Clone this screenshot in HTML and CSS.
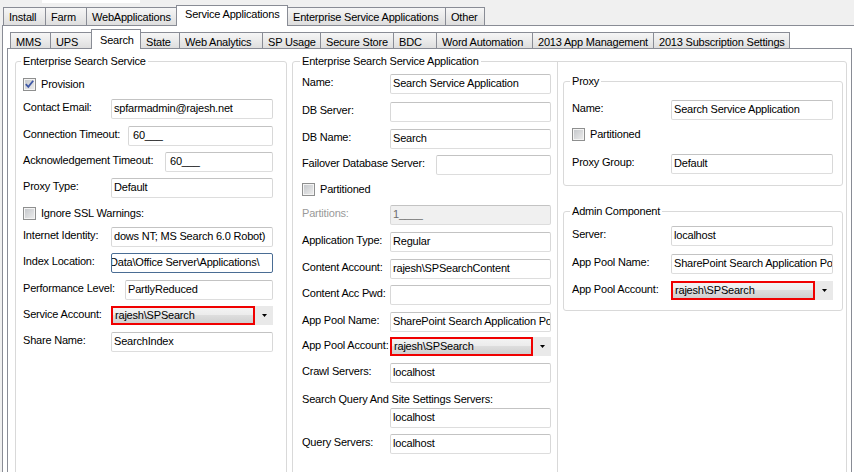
FILE: index.html
```html
<!DOCTYPE html>
<html>
<head>
<meta charset="utf-8">
<title>Search</title>
<link rel="stylesheet" href="styles.css">
</head>
<body>
<div class="blank"></div>
<div class="tabstrip outer-strip">
  <div class="tab w43">Install</div>
  <div class="tab w42">Farm</div>
  <div class="tab w91">WebApplications</div>
  <div class="tab sel w112">Service Applications</div>
  <div class="tab w159">Enterprise Service Applications</div>
  <div class="tab w40">Other</div>
</div>
<div class="outer">
  <div class="tabstrip inner-strip">
    <div class="tab w41">MMS</div>
    <div class="tab w42">UPS</div>
    <div class="tab sel w50">Search</div>
    <div class="tab w40">State</div>
    <div class="tab w84">Web Analytics</div>
    <div class="tab w59">SP Usage</div>
    <div class="tab w74">Secure Store</div>
    <div class="tab w44">BDC</div>
    <div class="tab w97">Word Automation</div>
    <div class="tab w122">2013 App Management</div>
    <div class="tab w137">2013 Subscription Settings</div>
  </div>
  <div class="page">
    <fieldset class="grp grp-left">
      <legend>Enterprise Search Service</legend>
      <div class="rows rows-left">
        <div class="row cbrow mt10"><span class="cb"><svg width="11" height="11" viewBox="0 0 11 11"><path d="M1.8 5.2 L4.3 7.9 L9.2 1.8" fill="none" stroke="#3f58a6" stroke-width="1.8"/></svg></span><span class="cblbl">Provision</span></div>
        <div class="row mt8"><span class="lbl">Contact Email:</span><span class="tb">spfarmadmin@rajesh.net</span></div>
        <div class="row mt7"><span class="lbl w105">Connection Timeout:</span><span class="tb mask">60___</span></div>
        <div class="row mt6"><span class="lbl w142">Acknowledgement Timeout:</span><span class="tb mask">60___</span></div>
        <div class="row mt6"><span class="lbl">Proxy Type:</span><span class="tb">Default</span></div>
        <div class="row cbrow mt9"><span class="cb"></span><span class="cblbl">Ignore SSL Warnings:</span></div>
        <div class="row mt7"><span class="lbl">Internet Identity:</span><span class="tb">dows NT; MS Search 6.0 Robot)</span></div>
        <div class="row mt6"><span class="lbl">Index Location:</span><span class="tb focus"><span class="tbtext shift">Data\Office Server\Applications\</span></span></div>
        <div class="row mt7"><span class="lbl w102">Performance Level:</span><span class="tb">PartlyReduced</span></div>
        <div class="row crow mt6"><span class="lbl">Service Account:</span><span class="combo"><span class="combo-field">rajesh\SPSearch</span><span class="combo-arrow"><svg width="5" height="3" viewBox="0 0 5 3"><polygon points="0,0 5,0 2.5,3" fill="#000"/></svg></span></span></div>
        <div class="row mt7"><span class="lbl">Share Name:</span><span class="tb">SearchIndex</span></div>
      </div>
    </fieldset>

    <fieldset class="grp grp-mid">
      <legend>Enterprise Search Service Application</legend>
      <div class="cols">
        <div class="col-main">
          <div class="row mt6"><span class="lbl">Name:</span><span class="tb">Search Service Application</span></div>
          <div class="row mt8"><span class="lbl">DB Server:</span><span class="tb"></span></div>
          <div class="row mt7"><span class="lbl">DB Name:</span><span class="tb">Search</span></div>
          <div class="row mt6"><span class="lbl w134">Failover Database Server:</span><span class="tb"></span></div>
          <div class="row cbrow mt8"><span class="cb"></span><span class="cblbl">Partitioned</span></div>
          <div class="row mt9"><span class="lbl dis">Partitions:</span><span class="tb tb-dis">1____</span></div>
          <div class="row mt7"><span class="lbl">Application Type:</span><span class="tb">Regular</span></div>
          <div class="row mt7"><span class="lbl">Content Account:</span><span class="tb">rajesh\SPSearchContent</span></div>
          <div class="row mt6"><span class="lbl">Content Acc Pwd:</span><span class="tb"></span></div>
          <div class="row mt7"><span class="lbl">App Pool Name:</span><span class="tb">SharePoint Search Application Pool</span></div>
          <div class="row crow mt5"><span class="lbl">App Pool Account:</span><span class="combo"><span class="combo-field">rajesh\SPSearch</span><span class="combo-arrow"><svg width="5" height="3" viewBox="0 0 5 3"><polygon points="0,0 5,0 2.5,3" fill="#000"/></svg></span></span></div>
          <div class="row mt7"><span class="lbl">Crawl Servers:</span><span class="tb">localhost</span></div>
          <div class="row lblrow mt10"><span class="lbl-wide">Search Query And Site Settings Servers:</span></div>
          <div class="row mt2"><span class="lbl"></span><span class="tb">localhost</span></div>
          <div class="row mt6"><span class="lbl">Query Servers:</span><span class="tb">localhost</span></div>
        </div>
        <div class="col-side">
          <fieldset class="grp grp-sub grp-proxy">
            <legend>Proxy</legend>
            <div class="rows rows-sub">
              <div class="row mt12"><span class="lbl w99">Name:</span><span class="tb">Search Service Application</span></div>
              <div class="row cbrow mt8"><span class="cb"></span><span class="cblbl">Partitioned</span></div>
              <div class="row mt13"><span class="lbl w99">Proxy Group:</span><span class="tb">Default</span></div>
            </div>
          </fieldset>
          <fieldset class="grp grp-sub grp-admin">
            <legend>Admin Component</legend>
            <div class="rows rows-sub">
              <div class="row mt8"><span class="lbl w99">Server:</span><span class="tb">localhost</span></div>
              <div class="row mt8"><span class="lbl w99">App Pool Name:</span><span class="tb">SharePoint Search Application Pool</span></div>
              <div class="row crow mt7"><span class="lbl w99">App Pool Account:</span><span class="combo"><span class="combo-field">rajesh\SPSearch</span><span class="combo-arrow"><svg width="5" height="3" viewBox="0 0 5 3"><polygon points="0,0 5,0 2.5,3" fill="#000"/></svg></span></span></div>
            </div>
          </fieldset>
        </div>
      </div>
    </fieldset>
  </div>
</div>
</body>
</html>
```

FILE: styles.css
```css
* { box-sizing: border-box; }
html, body { margin: 0; padding: 0; }
body {
  width: 854px;
  height: 472px;
  overflow: hidden;
  background: #f0f0f0;
  font-family: "Liberation Sans", Arial, sans-serif;
  font-size: 11px;
  letter-spacing: -0.2px;
  color: #000;
}

.blank { width: 98px; height: 3px; margin-left: 42px; background: #fff; }

/* tabs */
.tabstrip { display: flex; align-items: flex-end; height: 22px; padding-left: 3px; }
.tab {
  flex: none;
  height: 18px;
  border: 1px solid #898c95;
  border-bottom: 0;
  margin-left: -1px;
  background: linear-gradient(#f6f6f6, #e9e9e9 55%, #dedede);
  padding: 3px 0 0 5px;
  line-height: 13px;
  white-space: nowrap;
  overflow: hidden;
}
.tab:first-child { margin-left: 0; }
.tab.sel {
  position: relative;
  z-index: 1;
  height: 21px;
  margin-bottom: -1px;
  background: #fff;
  padding: 2px 0 0 8px;
}
.inner-strip .tab { height: 16px; padding-top: 3px; }
.inner-strip .tab.sel { height: 20px; padding-top: 4px; }

.w40 { width: 40px; } .w41 { width: 41px; } .w42 { width: 42px; } .w43 { width: 43px; }
.w44 { width: 44px; } .w50 { width: 50px; } .w59 { width: 59px; } .w74 { width: 74px; }
.w84 { width: 84px; } .w91 { width: 91px; } .w97 { width: 97px; } .w112 { width: 112px; }
.w122 { width: 122px; } .w137 { width: 137px; } .w159 { width: 159px; }

.outer {
  margin-left: 2px;
  width: 880px;
  height: 460px;
  border-top: 1px solid #898c95;
  border-left: 1px solid #898c95;
  background: #fff;
  padding-left: 4px;
}

.page {
  width: 845px;
  height: 440px;
  border: 1px solid #898c95;
  background: #fff;
  display: flex;
  align-items: flex-start;
  padding-left: 7px;
}

/* group boxes */
.grp {
  margin: 0;
  padding: 0;
  min-width: 0;
  border: 1px solid #d9d9d9;
  border-radius: 3px;
}
.grp legend { padding: 0 2px; line-height: 13px; }
.grp-left { width: 272px; height: 440px; margin-top: 6px; }
.grp-left legend { margin-left: 5px; }
.grp-mid { width: 555px; height: 440px; margin-top: 6px; margin-left: 5px; }
.grp-mid legend { margin-left: 7px; }
.grp-sub { width: 280px; }
.grp-sub legend { margin-left: 6px; }
.grp-proxy { margin-top: 13px; padding-bottom: 11px; }
.grp-admin { margin-top: 19px; padding-bottom: 10px; }

.rows-left { padding: 0 13px 0 7px; }
.rows-sub { padding: 0 9px 0 8px; }

.cols { display: flex; align-items: stretch; height: 420px; }
.col-main { width: 264px; flex: none; padding: 0 6px 0 9px; }
.col-side {
  flex: 1;
  margin-top: -6px;
  border-left: 1px solid #d9d9d9;
  padding-left: 5px;
}

/* rows */
.row { display: flex; align-items: flex-start; height: 20px; }
.crow { height: 19px; }
.cbrow { height: 13px; align-items: center; }
.lblrow { height: 13px; }
.mt2 { margin-top: 2px; } .mt5 { margin-top: 5px; } .mt6 { margin-top: 6px; }
.mt7 { margin-top: 7px; } .mt8 { margin-top: 8px; } .mt9 { margin-top: 9px; }
.mt10 { margin-top: 10px; } .mt12 { margin-top: 12px; } .mt13 { margin-top: 13px; }

.lbl {
  flex: none;
  width: 88px;
  margin-top: 2px;
  line-height: 13px;
  white-space: nowrap;
}
.w99.lbl { width: 99px; }
.w102.lbl { width: 102px; }
.w105.lbl { width: 105px; }
.w134.lbl { width: 134px; }
.w142.lbl { width: 142px; }
.lbl.dis { color: #9a9a9a; }
.lbl-wide { line-height: 13px; white-space: nowrap; }

.tb {
  flex: 1;
  min-width: 0;
  height: 20px;
  border: 1px solid;
  border-color: #c3c3c3 #d8d8d8 #dddddd #d8d8d8;
  border-radius: 2px;
  background: #fff;
  padding: 0 2px;
  line-height: 17px;
  white-space: nowrap;
  overflow: hidden;
}
.tb.mask { padding-left: 4px; }
.tb.tb-dis { background: #f0f0f0; color: #6d6d6d; }
.tb.focus { border-color: #4a6d94; }
.tbtext { flex: none; }
.shift { display: inline-block; margin-left: -4px; }

/* checkbox */
.cb {
  flex: none;
  width: 13px;
  height: 13px;
  border: 1px solid #8e8f8f;
  background: linear-gradient(135deg, #c2c5c9, #eeeeee);
  box-shadow: inset 0 0 0 1px #f4f4f4;
  display: flex;
  align-items: center;
  justify-content: center;
}
.cb svg { display: block; }
.cblbl { margin-left: 5px; line-height: 13px; white-space: nowrap; }

/* combo */
.combo { flex: 1; display: flex; height: 19px; min-width: 0; }
.combo-field {
  flex: 1;
  min-width: 0;
  border: 2px solid #f00000;
  background: linear-gradient(#f3f3f3, #ebebeb 50%, #dddddd 50%, #cfcfcf);
  padding-left: 2px;
  line-height: 15px;
  white-space: nowrap;
  overflow: hidden;
}
.combo-arrow {
  flex: none;
  width: 18px;
  background: #e9e9e9;
  display: flex;
  align-items: center;
  justify-content: center;
}
.combo-arrow svg { display: block; }
```
